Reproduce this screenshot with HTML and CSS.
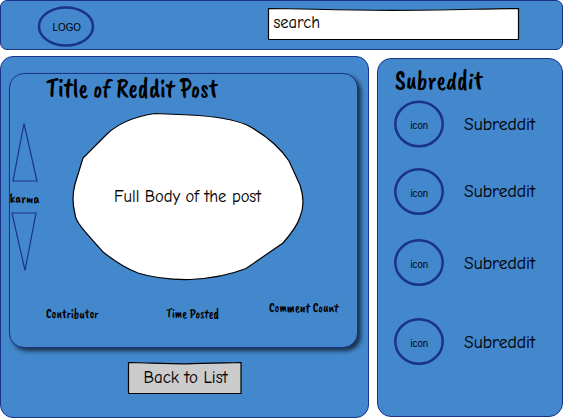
FILE: index.html
```html
<!DOCTYPE html>
<html lang="en">
<head>
<meta charset="utf-8">
<title>Reddit Post</title>
<link rel="stylesheet" href="styles.css">
</head>
<body>
<header class="header">
  <svg class="logo" width="57" height="42" viewBox="0 0 57 42"><ellipse class="ring" cx="29" cy="20.5" rx="27" ry="19"/><text class="small" x="15.5" y="25" textLength="28.5" lengthAdjust="spacingAndGlyphs">LOGO</text></svg>
  <svg class="search" width="253" height="34" viewBox="0 0 253 34"><path class="field" d="M1.5 1.5C45 2 70 3 125 3.3C175 3.3 210 2 251.500 1.500V32.500H1.500Z"/><text class="hand" x="6.5" y="21" textLength="46.5" lengthAdjust="spacingAndGlyphs">search</text></svg>
</header>
<div class="columns">
  <main class="panel post-panel">
    <article class="post">
      <svg class="title" width="180" height="36" viewBox="0 0 180 36"><text class="heading" x="0" y="22.5" textLength="172" lengthAdjust="spacingAndGlyphs">Title of Reddit Post</text></svg>
      <div class="content">
        <div class="votes">
          <svg width="30" height="62" viewBox="0 0 30 62"><path class="arrow" d="M14 1.500L27 59H3Z"/></svg>
          <svg width="34" height="26" viewBox="0 0 34 26"><text class="label" x="-0.5" y="17" textLength="30" lengthAdjust="spacingAndGlyphs">karma</text></svg>
          <svg width="30" height="62" viewBox="0 0 30 62"><path class="arrow" d="M2 3H26L15 60.500Z"/></svg>
        </div>
        <svg class="body" width="234" height="170" viewBox="71 111 234 170">
          <path class="blob" d="M155 113.500L190 115Q228 117 247 125Q275 140 289 161L300 185Q306 203 300 217Q297 227 283 243L246 268.500Q222 278 190 279.500Q160 280 138 273Q122 267 103 252C91 238 75 223 75 214Q71 199 75 184L83 158L107 134Q124 118 155 113.500Z"/>
          <text class="hand" x="114" y="202" textLength="147" lengthAdjust="spacingAndGlyphs">Full Body of the post</text>
        </svg>
      </div>
      <footer class="meta">
        <svg width="54" height="24" viewBox="0 0 54 24"><text class="label" x="0" y="16" textLength="52.5" lengthAdjust="spacingAndGlyphs">Contributor</text></svg>
        <svg width="54" height="24" viewBox="0 0 54 24"><text class="label" x="0" y="16" textLength="53" lengthAdjust="spacingAndGlyphs">Time Posted</text></svg>
        <svg class="comments" width="71" height="24" viewBox="0 0 71 24"><text class="label" x="0" y="16" textLength="69.5" lengthAdjust="spacingAndGlyphs">Comment Count</text></svg>
      </footer>
    </article>
    <svg class="back" width="115" height="34" viewBox="0 0 115 34"><path class="button" d="M1.500 1.500C25 2 40 2.800 58 2.800S95 2 114 1.500V32.500H1.500Z"/><text class="hand" x="16.5" y="22" textLength="84" lengthAdjust="spacingAndGlyphs">Back to List</text></svg>
  </main>
  <aside class="panel side">
    <svg class="side-title" width="95" height="32" viewBox="0 0 95 32"><text class="heading" x="1" y="23" textLength="88" lengthAdjust="spacingAndGlyphs">Subreddit</text></svg>
    <div class="row"><svg width="145" height="50" viewBox="0 0 145 50"><ellipse class="ring" cx="25" cy="24" rx="23.700" ry="22.300"/><text class="small" x="16.5" y="29" textLength="17.500" lengthAdjust="spacingAndGlyphs">icon</text><text class="hand" x="70" y="30" textLength="71" lengthAdjust="spacingAndGlyphs">Subreddit</text></svg></div>
    <div class="row second"><svg width="145" height="50" viewBox="0 0 145 50"><ellipse class="ring" cx="25" cy="23.500" rx="23.700" ry="22.300"/><text class="small" x="16.5" y="29" textLength="17.500" lengthAdjust="spacingAndGlyphs">icon</text><text class="hand" x="70" y="29" textLength="71" lengthAdjust="spacingAndGlyphs">Subreddit</text></svg></div>
    <div class="row third"><svg width="145" height="50" viewBox="0 0 145 50"><ellipse class="ring" cx="25" cy="23.500" rx="23.700" ry="22.300"/><text class="small" x="16.5" y="29" textLength="17.500" lengthAdjust="spacingAndGlyphs">icon</text><text class="hand" x="70" y="30" textLength="71" lengthAdjust="spacingAndGlyphs">Subreddit</text></svg></div>
    <div class="row fourth"><svg width="145" height="50" viewBox="0 0 145 50"><ellipse class="ring" cx="25" cy="23.500" rx="23.700" ry="22.300"/><text class="small" x="16.5" y="29" textLength="17.500" lengthAdjust="spacingAndGlyphs">icon</text><text class="hand" x="70" y="30" textLength="71" lengthAdjust="spacingAndGlyphs">Subreddit</text></svg></div>
  </aside>
</div>
</body>
</html>
```

FILE: styles.css
```css
* { box-sizing: border-box; }
body { margin: 0; width: 565px; height: 420px; background: #fff; overflow: hidden; }
svg { display: block; flex: none; overflow: visible; }
.header, .panel, .post { background: #4388cd; border: 1.400px solid #1b3289; }
.header { width: 563px; height: 50px; border-radius: 7px; display: flex; padding: 5px 0 0 36px; }
.search { margin: 1px 0 0 173px; }
.columns { display: flex; gap: 8px; align-items: flex-start; padding-top: 6px; }
.post-panel { width: 369px; height: 362px; border-radius: 13px; padding: 16px 8px; }
.post { width: 349px; height: 275px; border-radius: 15px; box-shadow: 3px 3px 4px rgba(0, 0, 0, .65); }
.title { margin-left: 36px; }
.content { display: flex; margin-top: 1px; }
.votes { width: 61px; padding-top: 11px; }
.votes svg:nth-child(2) { margin-top: 2px; }
.votes svg:nth-child(3) { margin-top: -2px; }
.meta { display: flex; padding: 21px 0 0 36px; }
.meta svg + svg { margin-left: 66px; }
.meta svg.comments { margin: -6px 0 0 49px; }
.back { margin: 13px 0 0 118px; }
.side { width: 186px; height: 359px; margin-top: 2px; border-radius: 14px; padding: 7px 16px; }
.row { margin-top: 2px; }
.second { margin-top: 18px; }
.third { margin-top: 21px; }
.fourth { margin-top: 29px; }
.ring { fill: none; stroke: #1b3289; stroke-width: 2.500; }
.arrow { fill: none; stroke: #1b3289; stroke-width: 1.200; }
.blob { fill: #fff; stroke: #000; stroke-width: 1.200; }
.field { fill: #fff; stroke: #000; stroke-width: 1.200; }
.button { fill: #ccc; stroke: #000; stroke-width: 1.200; }
.hand { font: 17px "Comic Sans MS", "Comic Neue", Lato, sans-serif; fill: #000; stroke: #000; stroke-width: .1; }
.heading { font: 27px "Caveat Brush", "Open Sans", sans-serif; fill: #000; }
.label { font: 13.500px "Caveat Brush", "Open Sans", sans-serif; fill: #000; }
.small { font: 10px "Liberation Sans", sans-serif; fill: #000; }
```
